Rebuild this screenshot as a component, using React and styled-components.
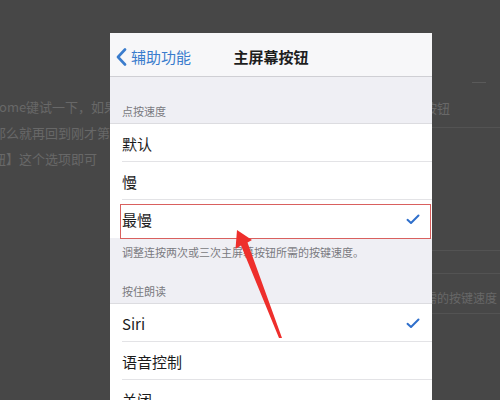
import React from "react";
import styled, { createGlobalStyle } from "styled-components";

const Global = createGlobalStyle`
  html, body { margin: 0; padding: 0; background: #474747; }
  body { font-family: "Noto Sans CJK SC", "Noto Sans", sans-serif; }
`;

const Page = styled.div`
  position: relative;
  width: 500px;
  height: 400px;
  overflow: hidden;
  background: #474747;
  display: flex;
  align-items: flex-start;
`;

const SideCol = styled.div`
  width: ${(p) => p.$w}px;
  flex: none;
  overflow: hidden;
  display: flex;
  flex-direction: column;
  padding-top: ${(p) => p.$top}px;
  box-sizing: border-box;
  & > * { flex: none; }
`;

const BgLine = styled.div`
  font-size: 13px;
  line-height: 26px;
  height: 26px;
  color: #686868;
  white-space: nowrap;
  margin-left: ${(p) => p.$shift || 0}px;
`;

const FaintRule = styled.div`
  height: 1px;
  background: #535353;
  margin-top: ${(p) => p.$mt}px;
`;

const Phone = styled.div`
  width: 322px;
  height: 367px;
  flex: none;
  margin-top: 33px;
  background: #efeff4;
  display: flex;
  flex-direction: column;
  overflow: hidden;
  & > * { flex: none; }
`;

const NavBar = styled.div`
  height: 44px;
  background: #f7f7f9;
  border-bottom: 1px solid #cfcfd4;
  display: grid;
  grid-template-columns: 1fr auto 1fr;
  align-items: center;
  padding-top: 4px;
  box-sizing: border-box;
`;

const Back = styled.div`
  display: flex;
  align-items: center;
  gap: 4px;
  padding-left: 6px;
  color: #3a7ccd;
  font-size: 15px;
`;

const Title = styled.div`
  font-size: 15px;
  font-weight: 700;
  color: #1e1e1e;
`;

const GroupHeader = styled.div`
  height: ${(p) => p.$h}px;
  display: flex;
  align-items: flex-end;
  padding: 0 0 ${(p) => p.$pb}px 12px;
  box-sizing: border-box;
  font-size: 11px;
  color: #7a7a80;
  border-bottom: 1px solid #dcdce0;
`;

const Group = styled.div`
  background: #fff;
  display: flex;
  flex-direction: column;
  & > * { flex: none; }
`;

const Row = styled.div`
  position: relative;
  height: 38px;
  display: flex;
  align-items: center;
  justify-content: space-between;
  padding: 0 12px;
  font-size: 15px;
  color: #1b1b1b;
  &::after {
    content: "";
    display: ${(p) => (p.$last ? "none" : "block")};
    position: absolute;
    left: 12px;
    right: 0;
    bottom: 0;
    height: 1px;
    background: #e3e3e6;
  }
`;

const Highlight = styled.div`
  position: absolute;
  left: 10px;
  right: 1px;
  top: 4px;
  bottom: -1px;
  border: 1.5px solid #d9605e;
  pointer-events: none;
`;

const Footer = styled.div`
  padding: 6px 12px 0;
  font-size: 11px;
  color: #7a7a80;
  line-height: 16px;
`;

const Check = () => (
  <svg width="14" height="11" viewBox="0 0 14 11">
    <path d="M1.5 5.8 L5 9 L12.5 1.5" fill="none" stroke="#2f6fcb" strokeWidth="2" strokeLinecap="round" strokeLinejoin="round" />
  </svg>
);

const Chevron = () => (
  <svg width="11" height="18" viewBox="0 0 11 18">
    <path d="M9 1.5 L2 9 L9 16.5" fill="none" stroke="#3a7ccd" strokeWidth="2.6" strokeLinecap="round" strokeLinejoin="round" />
  </svg>
);

const ArrowLayer = styled.svg`
  position: absolute;
  left: 0;
  top: 0;
  pointer-events: none;
`;

const RowLabel = styled.span`
  position: relative;
  z-index: 1;
  color: #1b1b1b;
`;

export default function App() {
  return (
    <>
      <Global />
      <Page>
        <SideCol $w={110} $top={94}>
          <BgLine $shift={-1}>ome键试一下，如果</BgLine>
          <BgLine $shift={-7}>那么就再回到刚才第</BgLine>
          <BgLine $shift={-7}>钮】这个选项即可</BgLine>
        </SideCol>
        <Phone>
          <NavBar>
            <Back>
              <Chevron />
              <span>辅助功能</span>
            </Back>
            <Title>主屏幕按钮</Title>
            <div />
          </NavBar>
          <GroupHeader $h={47} $pb={4}>点按速度</GroupHeader>
          <Group>
            <Row><RowLabel>默认</RowLabel></Row>
            <Row><RowLabel>慢</RowLabel></Row>
            <Row $last>
              <RowLabel>最慢</RowLabel>
              <Check />
              <Highlight />
            </Row>
          </Group>
          <Footer>调整连按两次或三次主屏幕按钮所需的按键速度。</Footer>
          <GroupHeader $h={44} $pb={4}>按住朗读</GroupHeader>
          <Group>
            <Row>
              <RowLabel>Siri</RowLabel>
              <Check />
            </Row>
            <Row><RowLabel>语音控制</RowLabel></Row>
            <Row $last><RowLabel>关闭</RowLabel></Row>
          </Group>
        </Phone>
        <SideCol $w={68} $top={82}>
          <FaintRule $mt={0} style={{ width: 14, marginLeft: 40, background: "#5a5a5a" }} />
          <BgLine $shift={-8} style={{ marginTop: 12 }}>按钮</BgLine>
          <FaintRule $mt={6} />
          <FaintRule $mt={122} />
          <FaintRule $mt={22} />
          <BgLine $shift={-7} style={{ fontSize: 12, marginTop: 11 }}>需的按键速度</BgLine>
          <FaintRule $mt={2} />
        </SideCol>
        <ArrowLayer width="500" height="400" viewBox="0 0 500 400">
          <polygon
            points="237,230 252,240 247.5,242.5 282,338 279,338 241,245.5 235.5,249"
            fill="#ee2f2c"
          />
        </ArrowLayer>
      </Page>
    </>
  );
}
